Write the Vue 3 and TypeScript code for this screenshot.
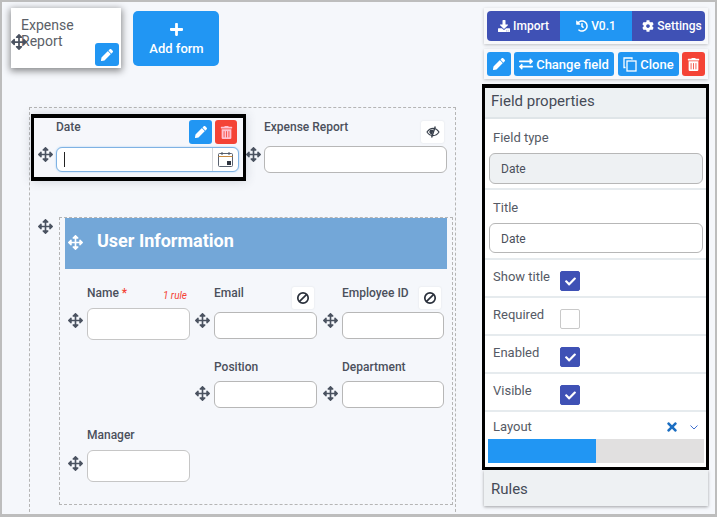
<script setup lang="ts">
const icons: Record<string, { box: string; d: string }> = {
  move: { box: '0 0 512 512', d: 'M352.201 425.775l-79.196 79.196c-9.373 9.373-24.568 9.373-33.941 0l-79.196-79.196c-15.119-15.119-4.411-40.971 16.971-40.97h51.162L228 284H127.196v51.162c0 21.382-25.851 32.09-40.971 16.971L7.029 272.937c-9.373-9.373-9.373-24.569 0-33.941L86.225 159.8c15.119-15.119 40.971-4.411 40.971 16.971V228H228V127.196h-51.23c-21.382 0-32.09-25.851-16.971-40.971l79.196-79.196c9.373-9.373 24.568-9.373 33.941 0l79.196 79.196c15.119 15.119 4.411 40.971-16.971 40.971h-51.162V228h100.804v-51.162c0-21.382 25.851-32.09 40.97-16.971l79.196 79.196c9.373 9.373 9.373 24.569 0 33.941L425.773 352.2c-15.119 15.119-40.971 4.411-40.97-16.971V284H284v100.804h51.23c21.382 0 32.09 25.851 16.971 40.971z' },
  pencil: { box: '0 0 512 512', d: 'M497.9 142.1l-46.1 46.1c-4.7 4.7-12.3 4.7-17 0l-111-111c-4.7-4.7-4.7-12.3 0-17l46.1-46.1c18.7-18.7 49.1-18.7 67.9 0l60.1 60.1c18.8 18.7 18.8 49.1 0 67.9zM284.2 99.8L21.6 362.4.4 483.9c-2.9 16.4 11.4 30.6 27.8 27.8l121.5-21.3 262.6-262.6c4.7-4.7 4.7-12.3 0-17l-111-111c-4.8-4.7-12.4-4.7-17.1 0z' },
  trash: { box: '0 0 448 512', d: 'M32 464a48 48 0 0 0 48 48h288a48 48 0 0 0 48-48V128H32zm272-256a16 16 0 0 1 32 0v224a16 16 0 0 1-32 0zm-96 0a16 16 0 0 1 32 0v224a16 16 0 0 1-32 0zm-96 0a16 16 0 0 1 32 0v224a16 16 0 0 1-32 0zM432 32H312l-9.4-18.7A24 24 0 0 0 281.1 0H166.8a23.72 23.72 0 0 0-21.4 13.3L136 32H16A16 16 0 0 0 0 48v32a16 16 0 0 0 16 16h416a16 16 0 0 0 16-16V48a16 16 0 0 0-16-16z' },
  check: { box: '0 0 512 512', d: 'M173.898 439.404l-166.4-166.4c-9.997-9.997-9.997-26.206 0-36.204l36.203-36.204c9.997-9.998 26.207-9.998 36.204 0L192 312.69 432.095 72.596c9.997-9.997 26.207-9.997 36.204 0l36.203 36.204c9.997 9.997 9.997 26.206 0 36.204l-294.4 294.401c-9.998 9.997-26.207 9.997-36.204-.001z' },
  times: { box: '0 0 352 512', d: 'M242.72 256l100.07-100.07c12.28-12.28 12.28-32.19 0-44.48l-22.24-22.24c-12.28-12.28-32.19-12.28-44.48 0L176 189.28 75.93 89.21c-12.28-12.28-32.19-12.28-44.48 0L9.21 111.45c-12.28 12.28-12.28 32.19 0 44.48L109.28 256 9.21 356.07c-12.28 12.28-12.28 32.19 0 44.48l22.24 22.24c12.28 12.28 32.2 12.28 44.48 0L176 322.72l100.07 100.07c12.28 12.28 32.2 12.28 44.48 0l22.24-22.24c12.28-12.28 12.28-32.19 0-44.48L242.72 256z' },
  plus: { box: '0 0 448 512', d: 'M416 208H272V64c0-17.67-14.33-32-32-32h-32c-17.67 0-32 14.33-32 32v144H32c-17.67 0-32 14.33-32 32v32c0 17.67 14.33 32 32 32h144v144c0 17.67 14.33 32 32 32h32c17.67 0 32-14.33 32-32V304h144c17.67 0 32-14.33 32-32v-32c0-17.67-14.33-32-32-32z' },
  cog: { box: '0 0 512 512', d: 'M487.4 315.7l-42.6-24.6c4.3-23.2 4.3-47 0-70.2l42.6-24.6c4.9-2.8 7.1-8.6 5.5-14-11.1-35.6-30-67.8-54.7-94.6-3.8-4.1-10-5.1-14.8-2.3L380.8 110c-17.9-15.4-38.5-27.3-60.8-35.1V25.8c0-5.6-3.9-10.5-9.4-11.7-36.7-8.2-74.3-7.8-109.2 0-5.5 1.2-9.4 6.1-9.4 11.7V75c-22.2 7.9-42.8 19.8-60.8 35.1L88.7 85.5c-4.9-2.8-11-1.9-14.8 2.3-24.7 26.7-43.6 58.9-54.7 94.6-1.7 5.4.6 11.2 5.5 14L67.3 221c-4.3 23.2-4.3 47 0 70.2l-42.6 24.6c-4.9 2.8-7.1 8.6-5.5 14 11.1 35.6 30 67.8 54.7 94.6 3.8 4.1 10 5.1 14.8 2.3l42.6-24.6c17.9 15.4 38.5 27.3 60.8 35.1v49.2c0 5.6 3.9 10.5 9.4 11.7 36.7 8.2 74.3 7.8 109.2 0 5.5-1.2 9.4-6.1 9.4-11.7v-49.2c22.2-7.9 42.8-19.8 60.8-35.1l42.6 24.6c4.9 2.8 11 1.9 14.8-2.3 24.7-26.7 43.6-58.9 54.7-94.6 1.5-5.5-.7-11.3-5.6-14.1zM256 336c-44.1 0-80-35.9-80-80s35.9-80 80-80 80 35.9 80 80-35.9 80-80 80z' },
  download: { box: '0 0 512 512', d: 'M216 0h80c13.3 0 24 10.7 24 24v168h87.7c17.8 0 26.7 21.5 14.1 34.1L269.7 378.3c-7.5 7.5-19.8 7.5-27.3 0L90.1 226.1c-12.6-12.6-3.7-34.1 14.1-34.1H192V24c0-13.3 10.7-24 24-24zm296 376v112c0 13.3-10.7 24-24 24H24c-13.3 0-24-10.7-24-24V376c0-13.3 10.7-24 24-24h146.7l49 49c20.1 20.1 52.5 20.1 72.6 0l49-49H488c13.3 0 24 10.7 24 24zm-124 88c0-11-9-20-20-20s-20 9-20 20 9 20 20 20 20-9 20-20zm64 0c0-11-9-20-20-20s-20 9-20 20 9 20 20 20 20-9 20-20z' },
  history: { box: '0 0 512 512', d: 'M504 255.531c.253 136.64-111.18 248.372-247.82 248.468-59.015.042-113.223-20.53-155.822-54.911-11.077-8.94-11.905-25.541-1.839-35.607l11.267-11.267c8.609-8.609 22.353-9.551 31.891-1.984C173.062 425.135 212.781 440 256 440c101.705 0 184-82.311 184-184 0-101.705-82.311-184-184-184-48.814 0-93.149 18.969-126.068 49.932l50.754 50.754c10.08 10.08 2.941 27.314-11.313 27.314H24c-8.837 0-16-7.163-16-16V38.627c0-14.254 17.234-21.393 27.314-11.314l49.372 49.372C129.209 34.136 189.552 8 256 8c136.81 0 247.747 110.78 248 247.531zm-180.912 78.784l9.823-12.63c8.138-10.463 6.253-25.542-4.21-33.679L288 256.349V152c0-13.255-10.745-24-24-24h-16c-13.255 0-24 10.745-24 24v135.651l65.409 50.874c10.463 8.137 25.541 6.253 33.679-4.21z' },
  exchange: { box: '0 0 512 512', d: 'M0 168v-16c0-13.255 10.745-24 24-24h360V80c0-21.367 25.899-32.042 40.971-16.971l80 80c9.372 9.373 9.372 24.569 0 33.941l-80 80C409.956 271.982 384 261.456 384 240v-48H24c-13.255 0-24-10.745-24-24zm488 152H128v-48c0-21.314-25.862-32.08-40.971-16.971l-80 80c-9.372 9.373-9.372 24.569 0 33.941l80 80C102.057 463.997 128 453.437 128 432v-48h360c13.255 0 24-10.745 24-24v-16c0-13.255-10.745-24-24-24z' }
}

interface Cell {
  label: string
  required?: boolean
  rule?: string
  ban?: boolean
  tall?: boolean
  narrow?: boolean
  empty?: boolean
}

const cells: Cell[] = [
  { label: 'Name', required: true, rule: '1 rule', tall: true },
  { label: 'Email', ban: true },
  { label: 'Employee ID', ban: true, narrow: true },
  { label: '', empty: true },
  { label: 'Position' },
  { label: 'Department', narrow: true },
  { label: 'Manager', tall: true }
]

const toggles = [
  { label: 'Show title', on: true },
  { label: 'Required', on: false },
  { label: 'Enabled', on: true },
  { label: 'Visible', on: true }
]
</script>

<template>
  <div class="root">
    <main class="main">
      <div class="tabs">
        <div class="form-tab">
          <span class="tab-title">Expense Report</span>
          <svg class="tab-move ico" :viewBox="icons.move.box"><path :d="icons.move.d" /></svg>
          <button class="sq blue tab-edit"><svg class="ico i12" :viewBox="icons.pencil.box"><path :d="icons.pencil.d" /></svg></button>
        </div>
        <button class="add-form">
          <svg class="ico i-plus" :viewBox="icons.plus.box"><path :d="icons.plus.d" /></svg>
          <span>Add form</span>
        </button>
      </div>

      <div class="canvas">
        <div class="top-row">
          <div class="selected">
            <div class="move-col date-move"><svg class="ico move" :viewBox="icons.move.box"><path :d="icons.move.d" /></svg></div>
            <div class="date-body">
              <div class="date-head">
                <span class="label">Date</span>
                <div class="date-actions">
                  <button class="sq blue"><svg class="ico i12" :viewBox="icons.pencil.box"><path :d="icons.pencil.d" /></svg></button>
                  <button class="sq red"><svg class="ico i13 pinkish" :viewBox="icons.trash.box"><path :d="icons.trash.d" /></svg></button>
                </div>
              </div>
              <div class="date-input">
                <span class="caret"></span>
                <span class="cal">
                  <svg width="15" height="15" viewBox="0 0 15 15" fill="none">
                    <rect x="0.5" y="1.5" width="14" height="13" rx="1" stroke="#5a6270" />
                    <line x1="0.5" y1="4.500" x2="14.500" y2="4.500" stroke="#c98a3f" />
                    <line x1="4" y1="0" x2="4" y2="3" stroke="#4a5260" />
                    <line x1="11" y1="0" x2="11" y2="3" stroke="#4a5260" />
                    <rect x="9" y="9" width="4" height="4" fill="#2f3540" />
                  </svg>
                </span>
              </div>
            </div>
          </div>

          <div class="report">
            <div class="move-col report-move"><svg class="ico move" :viewBox="icons.move.box"><path :d="icons.move.d" /></svg></div>
            <div class="report-body">
              <div class="report-head">
                <span class="label">Expense Report</span>
                <button class="ghost eye-btn">
                  <svg width="14" height="12" viewBox="0 0 14 12" fill="none">
                    <path d="M1 6c1.600-2.400 3.600-3.600 6-3.600S11.400 3.600 13 6c-1.600 2.400-3.600 3.600-6 3.600S2.600 8.400 1 6z" stroke="#39404c" stroke-width="1.100" />
                    <path d="M4 3.800h3.600L6 8.800C4.800 8.500 3.700 7.500 3.200 6z" fill="#39404c" />
                    <line x1="9.300" y1="0.600" x2="5.600" y2="11.400" stroke="#39404c" stroke-width="1.400" />
                  </svg>
                </button>
              </div>
              <div class="text-input report-input"></div>
            </div>
          </div>
        </div>

        <div class="section-wrap">
          <div class="section-move"><svg class="ico move" :viewBox="icons.move.box"><path :d="icons.move.d" /></svg></div>
          <section class="section">
            <header class="section-head">
              <svg class="ico move white" :viewBox="icons.move.box"><path :d="icons.move.d" /></svg>
              <h2>User Information</h2>
            </header>
            <div class="grid">
              <div v-for="(c, i) in cells" :key="i" class="cell" :class="{ 'with-ban': c.ban, 'cell-tall': c.tall, 'cell-narrow': c.narrow }">
                <template v-if="!c.empty">
                  <div class="move-col cell-move"><svg class="ico move" :viewBox="icons.move.box"><path :d="icons.move.d" /></svg></div>
                  <div class="cell-body">
                    <div class="cell-head">
                      <span class="label">{{ c.label }}<span v-if="c.required" class="star"> *</span></span>
                      <span v-if="c.rule" class="rule">{{ c.rule }}</span>
                      <button v-if="c.ban" class="ghost ban">
                        <svg width="14" height="14" viewBox="0 0 14 14" fill="none" stroke="#2a303b" stroke-width="1.700">
                          <circle cx="7" cy="7" r="5.200" />
                          <line x1="3.300" y1="10.700" x2="10.700" y2="3.300" />
                        </svg>
                      </button>
                    </div>
                    <div class="text-input"></div>
                  </div>
                </template>
              </div>
            </div>
          </section>
        </div>
      </div>
    </main>

    <aside class="side">
      <div class="card bar-one">
        <div class="btn-group">
          <button class="seg indigo"><svg class="ico i12" :viewBox="icons.download.box"><path :d="icons.download.d" /></svg>Import</button>
          <button class="seg blue"><svg class="ico i12" :viewBox="icons.history.box"><path :d="icons.history.d" /></svg>V0.1</button>
          <button class="seg indigo"><svg class="ico i12" :viewBox="icons.cog.box"><path :d="icons.cog.d" /></svg>Settings</button>
        </div>
      </div>
      <div class="card bar-two">
        <button class="act blue sq24"><svg class="ico i12" :viewBox="icons.pencil.box"><path :d="icons.pencil.d" /></svg></button>
        <button class="act blue change"><svg class="ico i14" :viewBox="icons.exchange.box"><path :d="icons.exchange.d" /></svg>Change field</button>
        <button class="act blue clone">
          <svg width="14" height="15" viewBox="0 0 14 15" fill="none" stroke="#fff" stroke-width="1.300">
            <path d="M2.500 10.500H1V1h8v1.500" />
            <rect x="4" y="4" width="9" height="10" />
          </svg>
          Clone
        </button>
        <button class="act red sq23"><svg class="ico i13" :viewBox="icons.trash.box"><path :d="icons.trash.d" /></svg></button>
      </div>

      <div class="panel">
        <div class="panel-head">Field properties</div>
        <div class="group g-type">
          <label class="g-label">Field type</label>
          <div class="box disabled">Date</div>
        </div>
        <div class="group g-title">
          <label class="g-label">Title</label>
          <div class="box">Date</div>
        </div>
        <div v-for="t in toggles" :key="t.label" class="toggle">
          <span class="t-label">{{ t.label }}</span>
          <span class="check" :class="{ on: t.on }">
            <svg v-if="t.on" class="ico i10" :viewBox="icons.check.box"><path :d="icons.check.d" /></svg>
          </span>
        </div>
        <div class="layout">
          <div class="layout-head">
            <span>Layout</span>
            <svg class="ico x" :viewBox="icons.times.box"><path :d="icons.times.d" /></svg>
            <svg class="chev" width="8" height="5" viewBox="0 0 8 5" fill="none" stroke="#3f6fd0"><path d="M.5.500 4 4 7.500.500" /></svg>
          </div>
          <div class="progress"><div class="fill" :style="{ width: '50%' }"></div></div>
        </div>
      </div>
      <div class="rules">Rules</div>
    </aside>
  </div>
</template>

<style scoped>
* { box-sizing: border-box; }
button { border: 0; padding: 0; font-family: inherit; cursor: pointer; }
.root {
  width: 717px; height: 517px; display: flex; overflow: hidden;
  border: 2px solid #bdbdbd; border-bottom-width: 3px;
  background: #f5f7fb; font-family: Roboto, "Liberation Sans", sans-serif; color: #4b505c;
}
.main { width: 480px; flex: none; }
.side { width: 227px; flex: none; }
.ico { display: block; fill: currentColor; flex: none; }
.i10 { width: 11px; height: 11px; }
.i12 { width: 12px; height: 12px; }
.i13 { width: 13px; height: 13px; }
.i14 { width: 14px; height: 14px; }
.move { width: 15px; height: 15px; color: #4a5260; }
.move.white { color: #fff; }
.blue { background: #2196f3; color: #fff; }
.red { background: #f44336; color: #fff; }
.indigo { background: #3f51b5; color: #fff; }
.pinkish { color: #ffc1d0; }

.tabs { display: flex; align-items: flex-start; padding: 6px 0 0 9px; }
.form-tab {
  position: relative; width: 110px; height: 60px; background: #fff;
  box-shadow: 0 2px 7px 1px rgba(0, 0, 0, .45); padding: 9px 20px 0 10px;
  font-size: 14px; line-height: 16px; color: #5b5f68;
}
.tab-title { display: block; width: 70px; }
.tab-move { position: absolute; left: 0; top: 26px; width: 16px; height: 16px; color: #4a5260; }
.sq { width: 24px; height: 24px; border-radius: 3px; display: flex; align-items: center; justify-content: center; }
.tab-edit { position: absolute; right: 2px; top: 35px; height: 23px; }
.add-form {
  margin: 3px 0 0 12px; width: 86px; height: 55px; border-radius: 5px;
  background: #2196f3; color: #fff; font-size: 13px; font-weight: 500;
  display: flex; flex-direction: column; align-items: center; padding: 11px 0 0 1px; gap: 4px;
}
.i-plus { width: 13px; height: 15px; }

.canvas { margin: 39px 0 0 27px; width: 427px; height: 410px; border: 1px dashed #b5b5b5; border-bottom: 0; }
.top-row { display: flex; align-items: flex-start; margin-top: 6px; padding-left: 1px; }
.label { font-size: 12px; font-weight: 500; line-height: 12px; color: #4b505c; white-space: nowrap; }
.move-col { display: flex; justify-content: center; flex: none; }

.selected {
  width: 215px; height: 67px; flex: none; display: flex;
  border: solid #000; border-width: 4px 3px; background: #f6f7fb;
  box-shadow: 0 0 10px rgba(60, 70, 90, .2);
}
.date-move { width: 22px; padding-top: 29px; }
.date-body { width: 183px; }
.date-head { height: 29px; display: flex; justify-content: space-between; align-items: flex-start; padding: 2px 2px 0 0; }
.date-head .label { margin-top: 1px; }
.date-actions { display: flex; gap: 3px; }
.date-actions .sq { width: 23px; }
.date-actions .red { width: 22px; }
.date-input {
  height: 25px; border: 1px solid #7fb2e3; border-radius: 6px; background: #fff;
  display: flex; justify-content: space-between; align-items: stretch;
  box-shadow: 0 0 2px rgba(33, 150, 243, .4);
}
.caret { width: 1px; height: 15px; background: #222; margin: 4px 0 0 7px; }
.cal { width: 26px; border-left: 1px solid #d5d7db; display: flex; align-items: center; justify-content: center; }

.report { display: flex; }
.report-move { width: 18px; padding-top: 32px; justify-content: flex-start; }
.report-move .move { margin-top: 1px; }
.report-body { width: 183px; }
.report-head { height: 32px; display: flex; justify-content: space-between; align-items: flex-start; padding: 7px 3px 0 0; }
.ghost {
  width: 22px; height: 22px; background: #fff; border-radius: 2px; display: flex;
  align-items: center; justify-content: center; box-shadow: 0 0 2px rgba(0, 0, 0, .1);
}
.eye-btn { width: 23px; }
.text-input { height: 27px; background: #fff; border: 1px solid #b7b7b7; border-radius: 6px; }

.section-wrap { display: flex; align-items: flex-start; margin-top: 36px; }
.section-move { width: 29px; padding: 2px 0 0 8px; flex: none; }
.section { width: 394px; height: 288px; border: 1px dashed #b5b5b5; }
.section-head {
  margin-left: 5px; width: 382px; height: 51px; background: #73a7d8; color: #fff;
  display: flex; align-items: center; padding-left: 3px;
}
.section-head h2 { margin: -6px 0 0 14px; font-size: 18px; font-weight: 700; line-height: 1; }
.section-head .move { margin-top: -3px; }
.grid { display: grid; grid-template-columns: 127px 128px 127px; row-gap: 21px; padding: 18px 0 0 3px; align-items: start; }
.cell { display: flex; min-height: 1px; }
.cell-move { width: 24px; justify-content: flex-start; padding: 25px 0 0 5px; }
.with-ban .cell-move, .cell-tall .cell-move { padding-top: 26px; }
.cell-tall:nth-child(7) .cell-move { padding-top: 27px; }
.cell-body { width: 103px; }
.cell-narrow .cell-body { width: 102px; }
.cell-head { height: 20px; display: flex; justify-content: space-between; align-items: flex-start; padding-right: 3px; }
.cell-tall .cell-head { height: 21px; }
.with-ban .cell-head { height: 25px; }
.cell-tall .text-input { height: 32px; border-color: #c6c6c6; }
.star { color: #f44336; }
.rule { font-size: 10px; font-style: italic; color: #f44336; line-height: 12px; margin-top: 3px; }

.card { margin: 0 1px 0 2px; background: #f7f8fb; box-shadow: 0 1px 3px rgba(0, 0, 0, .22); padding: 3px; }
.bar-one { margin-top: 6px; height: 36px; }
.bar-two { margin-top: 5px; height: 30px; display: flex; gap: 3px; }
.btn-group { display: flex; height: 30px; border-radius: 4px; overflow: hidden; }
.seg { width: 73px; font-size: 12px; font-weight: 500; display: flex; align-items: center; justify-content: center; gap: 3px; white-space: nowrap; }
.seg.blue { width: 72px; }
.seg:last-child { padding-left: 7px; }
.act { height: 24px; border-radius: 3px; font-size: 13px; font-weight: 500; display: flex; align-items: center; justify-content: center; gap: 3px; white-space: nowrap; }
.sq24 { width: 24px; }
.sq23 { width: 23px; }
.change { width: 100px; }
.clone { width: 61px; margin-left: 1px; }

.panel { margin-top: 5px; height: 386px; border: solid #000; border-width: 4px 3px 3px; background: #fff; }
.panel-head {
  height: 31px; background: #edf1f3; border-bottom: 2px solid #dfe5e8;
  font-size: 15px; line-height: 27px; padding-left: 6px; color: #454b57;
}
.group { border-bottom: 2px solid #e6ebee; }
.g-type { height: 71px; padding-top: 11px; }
.g-title { height: 70px; padding-top: 10px; }
.g-label { display: block; font-size: 13px; line-height: 16px; margin: 0 0 7px 8px; color: #555a65; }
.box {
  margin: 0 3px 0 4px; height: 30px; border: 1px solid #b7b7b7; border-radius: 6px;
  font-size: 12px; line-height: 30px; padding-left: 11px; color: #4b505c; background: #fff;
}
.box.disabled { height: 31px; line-height: 31px; background: #eef1f3; }
.toggle { height: 38px; display: flex; align-items: flex-start; padding: 11px 0 0 8px; border-bottom: 2px solid #e6ebee; }
.t-label { width: 67px; font-size: 13px; line-height: 16px; margin-top: -2px; color: #555a65; }
.check { width: 20px; height: 20px; border: 1px solid #c9c9c9; border-radius: 2px; background: #fff; display: flex; align-items: center; justify-content: center; color: #fff; }
.check.on { background: #3f51b5; border-color: #3f51b5; }
.layout { padding-top: 7px; }
.layout-head { height: 16px; display: flex; align-items: center; padding: 0 8px; font-size: 13px; line-height: 16px; color: #555a65; }
.layout-head span { flex: 1; }
.x { width: 10px; height: 14px; color: #1b6ec2; }
.chev { margin-left: 13px; }
.progress { margin: 4px 2px 0 3px; height: 24px; background: #e1e0e0; }
.fill { height: 100%; background: #2196f3; }
.rules {
  margin: 0 1px 0 2px; height: 36px; background: #eef1f3; box-shadow: 0 1px 3px rgba(0, 0, 0, .35);
  font-size: 15px; line-height: 38px; padding-left: 7px; color: #454b57;
}
</style>
